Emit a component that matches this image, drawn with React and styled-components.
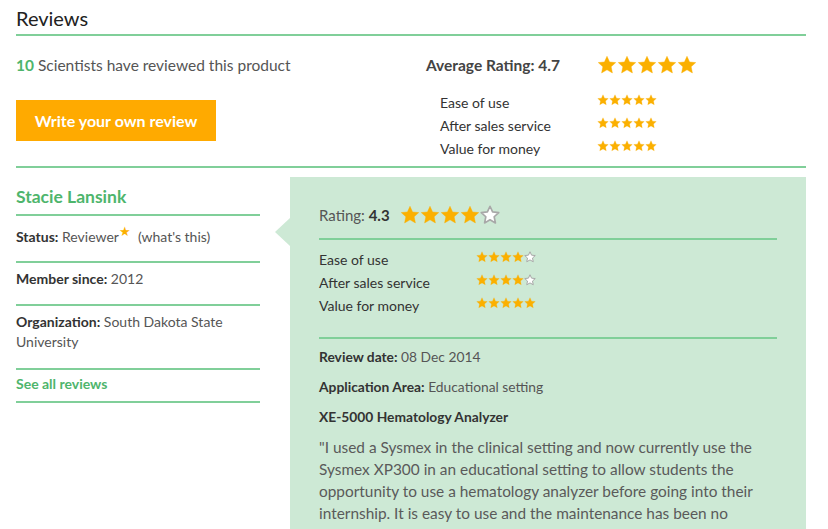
import React from "react";
import styled, { createGlobalStyle } from "styled-components";

const GlobalStyle = createGlobalStyle`
  body {
    margin: 0;
    background: #fff;
    font-family: Lato, "Open Sans", sans-serif;
    color: #333;
    overflow: hidden;
  }
`;

const GREEN_LINE = "#80cf99";
const GREEN_TEXT = "#4eb56c";
const STAR = "#fbb000";

const Page = styled.div`
  padding: 0 22px 0 16px;
  height: 529px;
  overflow: hidden;
`;

const Title = styled.h2`
  margin: 0;
  padding-top: 5px;
  font-size: 20px;
  font-weight: 400;
  line-height: 26px;
  color: #222;
  border-bottom: 2px solid ${GREEN_LINE};
  padding-bottom: 3px;
`;

const Summary = styled.div`
  display: flex;
  padding: 19px 0 7px;
  border-bottom: 2px solid ${GREEN_LINE};
`;

const SummaryLeft = styled.div`
  width: 410px;
`;

const Count = styled.div`
  font-size: 15.5px;
  line-height: 20px;
  color: #555;

  b {
    color: ${GREEN_TEXT};
  }
`;

const WriteButton = styled.button`
  display: block;
  margin-top: 25px;
  width: 200px;
  height: 41px;
  border: none;
  background: #ffaa00;
  color: #fff;
  font-family: Lato, sans-serif;
  font-weight: 700;
  font-size: 16px;
  cursor: pointer;
`;

const RatingTable = styled.div`
  display: grid;
  grid-template-columns: 171px auto;
  align-items: center;
`;

const AverageLabel = styled.div`
  font-size: 15.5px;
  font-weight: 700;
  color: #444;
  line-height: 20px;
`;

const SubList = styled.div`
  grid-column: 1 / span 2;
  display: grid;
  grid-template-columns: 157px auto;
  row-gap: 3px;
  margin: 18px 0 0 14px;
  align-items: center;
`;

const SubLabel = styled.div`
  font-size: 14px;
  line-height: 20px;
  color: #333;
`;

const StarRow = styled.div`
  display: flex;
  gap: ${(p) => p.$gap}px;
  margin-top: ${(p) => p.$offset || 0}px;
`;

const ReviewSection = styled.div`
  display: flex;
  gap: 30px;
  margin-top: 9px;
`;

const Profile = styled.div`
  width: 244px;
  flex: none;
  margin-top: -9px;
`;

const Name = styled.div`
  font-size: 17.5px;
  font-weight: 700;
  color: ${GREEN_TEXT};
  line-height: 20px;
  padding: 19px 0 7px;
  border-bottom: 2px solid ${GREEN_LINE};
`;

const ProfileRow = styled.div`
  font-size: 14px;
  line-height: 20px;
  color: #555;
  padding: ${(p) => p.$top}px 0 ${(p) => p.$bottom}px;
  border-bottom: 2px solid ${GREEN_LINE};

  b {
    color: #333;
  }
`;

const StatusStar = styled.sup`
  color: ${STAR};
  font-size: 13px;
`;

const SeeAll = styled.a`
  font-weight: 700;
  color: ${GREEN_TEXT};
  text-decoration: none;
`;

const Panel = styled.div`
  position: relative;
  flex: 1;
  background: #cde9d5;
  padding: 28px 29px 40px;
  min-height: 400px;

  &::before {
    content: "";
    position: absolute;
    left: -15px;
    top: 41px;
    border-style: solid;
    border-width: 14px 15px 14px 0;
    border-color: transparent #cde9d5 transparent transparent;
  }
`;

const RatingHead = styled.div`
  display: flex;
  align-items: center;
  gap: 10px;
  font-size: 15px;
  line-height: 20px;
  color: #555;
  padding-bottom: 13px;
  border-bottom: 2px solid ${GREEN_LINE};

  b {
    color: #333;
    font-weight: 700;
  }
`;

const PanelSubs = styled.div`
  display: grid;
  grid-template-columns: 157px auto;
  row-gap: 3px;
  padding: 10px 0 21px;
  border-bottom: 2px solid ${GREEN_LINE};
  align-items: center;
`;

const Meta = styled.div`
  font-size: 13.8px;
  line-height: 20px;
  color: #555;
  margin-top: ${(p) => p.$top}px;

  b {
    color: #333;
    font-weight: 700;
  }
`;

const Body = styled.p`
  margin: 9px 0 0;
  font-size: 15.4px;
  line-height: 22px;
  color: #5a5a5a;
`;

function Star({ size, fill }) {
  const empty = fill === 0;
  return (
    <svg width={size} height={size} viewBox="0 0 24 24">
      <polygon
        points="12,1.5 15.1,8.3 22.5,9.1 17,14.1 18.5,21.5 12,17.8 5.5,21.5 7,14.1 1.5,9.1 8.9,8.3"
        fill={empty ? "#fff" : STAR}
        stroke={empty ? "#a8a8a8" : STAR}
        strokeWidth={empty ? 2 : 0.5}
        strokeLinejoin="round"
      />
    </svg>
  );
}

function Stars({ value, size, gap, offset }) {
  return (
    <StarRow $gap={gap} $offset={offset}>
      {[1, 2, 3, 4, 5].map((i) => (
        <Star key={i} size={size} fill={i <= value ? 1 : 0} />
      ))}
    </StarRow>
  );
}

const overall = [
  { label: "Ease of use", value: 5 },
  { label: "After sales service", value: 5 },
  { label: "Value for money", value: 5 },
];

const review = [
  { label: "Ease of use", value: 4 },
  { label: "After sales service", value: 4 },
  { label: "Value for money", value: 5 },
];

export default function App() {
  return (
    <>
      <GlobalStyle />
      <Page>
        <Title>Reviews</Title>
        <Summary>
          <SummaryLeft>
            <Count>
              <b>10</b> Scientists have reviewed this product
            </Count>
            <WriteButton>Write your own review</WriteButton>
          </SummaryLeft>
          <RatingTable>
            <AverageLabel>Average Rating: 4.7</AverageLabel>
            <Stars value={5} size={20} gap={-1} />
            <SubList>
              {overall.map((r) => (
                <React.Fragment key={r.label}>
                  <SubLabel>{r.label}</SubLabel>
                  <Stars value={r.value} size={12} gap={0} offset={-6} />
                </React.Fragment>
              ))}
            </SubList>
          </RatingTable>
        </Summary>
        <ReviewSection>
          <Profile>
            <Name>Stacie Lansink</Name>
            <ProfileRow $top={5} $bottom={14}>
              <b>Status:</b> Reviewer
              <StatusStar>★</StatusStar>&nbsp; (what's this)
            </ProfileRow>
            <ProfileRow $top={6} $bottom={15}>
              <b>Member since:</b> 2012
            </ProfileRow>
            <ProfileRow $top={6} $bottom={16}>
              <b>Organization:</b> South Dakota State University
            </ProfileRow>
            <ProfileRow $top={4} $bottom={7}>
              <SeeAll href="#">See all reviews</SeeAll>
            </ProfileRow>
          </Profile>
          <Panel>
            <RatingHead>
              <span>
                Rating: <b>4.3</b>
              </span>
              <Stars value={4} size={20} gap={-1} />
            </RatingHead>
            <PanelSubs>
              {review.map((r) => (
                <React.Fragment key={r.label}>
                  <SubLabel>{r.label}</SubLabel>
                  <Stars value={r.value} size={12} gap={0} offset={-6} />
                </React.Fragment>
              ))}
            </PanelSubs>
            <Meta $top={8}>
              <b>Review date:</b> 08 Dec 2014
            </Meta>
            <Meta $top={10}>
              <b>Application Area:</b> Educational setting
            </Meta>
            <Meta $top={10}>
              <b>XE-5000 Hematology Analyzer</b>
            </Meta>
            <Body>
              "I used a Sysmex in the clinical setting and now currently use the
              Sysmex XP300 in an educational setting to allow students the
              opportunity to use a hematology analyzer before going into their
              internship. It is easy to use and the maintenance has been no
              problem at all."
            </Body>
          </Panel>
        </ReviewSection>
      </Page>
    </>
  );
}
